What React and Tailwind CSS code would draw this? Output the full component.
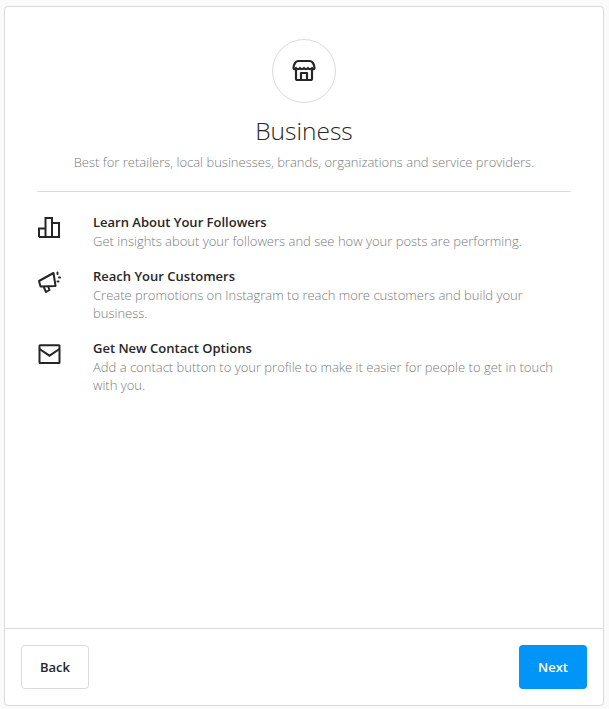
const FEATURES = [
  {
    title: 'Learn About Your Followers',
    text: 'Get insights about your followers and see how your posts are performing.',
    icon: (
      <svg viewBox="0 0 24 24" className="h-6 w-6" fill="none" stroke="#262626" strokeWidth="2">
        <path d="M2 20V11.5H8.5V20M8.5 20V1H15V20M15 20V6H22V20ZM2 20H22" />
      </svg>
    ),
  },
  {
    title: 'Reach Your Customers',
    text: 'Create promotions on Instagram to reach more customers and build your business.',
    icon: (
      <svg viewBox="0 0 24 24" className="h-6 w-6" fill="none" stroke="#262626" strokeWidth="2" strokeLinejoin="round">
        <path d="M2 10L16.5 2L18.5 15L3.5 15.5Z" />
        <path d="M6.5 15.5L9 21L12.5 19L11 15" />
        <path d="M20.5 1.5V3M22 6.5H23M20.5 10.5H21.5" strokeLinecap="round" />
      </svg>
    ),
  },
  {
    title: 'Get New Contact Options',
    text: 'Add a contact button to your profile to make it easier for people to get in touch with you.',
    icon: (
      <svg viewBox="0 0 24 24" className="h-6 w-6" fill="none" stroke="#262626" strokeWidth="2">
        <rect x="2.5" y="2.3" width="20" height="17.7" rx="0.5" />
        <path d="M2.5 6L12.5 12.7L22.5 6" />
      </svg>
    ),
  },
];

function StoreIcon() {
  return (
    <svg viewBox="0 0 24 24" className="h-6 w-6" fill="none" stroke="#262626" strokeWidth="2.2" strokeLinejoin="round">
      <path d="M6 2H18C20.5 2 22.5 6 22.5 9C22.5 10.5 20.5 10.5 20 9C19 10.5 17 10.5 16 9C15 10.5 13 10.5 12 9C11 10.5 9 10.5 8 9C7 10.5 5 10.5 4 9C3.5 10.5 1.5 10.5 1.5 9C1.5 6 3.5 2 6 2Z" />
      <path d="M4 10.5V19.5C4 20.5 4.5 21 5.5 21H18.5C19.5 21 20 20.5 20 19.5V10.5" />
      <path d="M9 21V14H15V21" />
    </svg>
  );
}

export default function App() {
  return (
    <div className="h-[709px] w-[609px] bg-[#fafafa] pt-[6px] pr-[5px] pb-[3px] pl-[4px] font-['Open_Sans','Noto_Sans',sans-serif]">
      <div className="flex h-full flex-col rounded border border-[#dbdbdb] bg-white">
        <div className="flex-1 px-8">
          <div className="flex flex-col items-center pt-8">
            <div className="flex h-16 w-16 items-center justify-center rounded-full border border-[#dbdbdb]">
              <StoreIcon />
            </div>
            <h1 className="mt-[10px] text-[24.5px] leading-[36px] font-light text-[#262626]">Business</h1>
            <p className="mt-[4px] text-[13px] leading-[18px] font-light text-[#7a7a7a]">
              Best for retailers, local businesses, brands, organizations and service providers.
            </p>
          </div>
          <div className="mt-[20px] h-px bg-[#dbdbdb]" />
          <ul className="mt-[21px] flex flex-col gap-[17px]">
            {FEATURES.map(f => (
              <li key={f.title} className="flex">
                <div className="w-14 flex-shrink-0 pt-[4px]">{f.icon}</div>
                <div className="min-w-0 flex-1 pr-1">
                  <h2 className="text-[13px] leading-[18px] font-semibold text-[#262626]">{f.title}</h2>
                  <p className="mt-px text-[13px] leading-[18px] font-light text-[#7a7a7a]">{f.text}</p>
                </div>
              </li>
            ))}
          </ul>
        </div>
        <div className="flex items-center justify-between border-t border-[#dbdbdb] px-4 py-4">
          <button type="button" className="h-11 w-[68px] rounded border border-[#dbdbdb] bg-white pt-px text-[13px] font-semibold text-[#262626]">
            Back
          </button>
          <button type="button" className="h-11 w-[68px] rounded bg-[#0095f6] pt-px text-[13px] font-semibold text-white">
            Next
          </button>
        </div>
      </div>
    </div>
  );
}
